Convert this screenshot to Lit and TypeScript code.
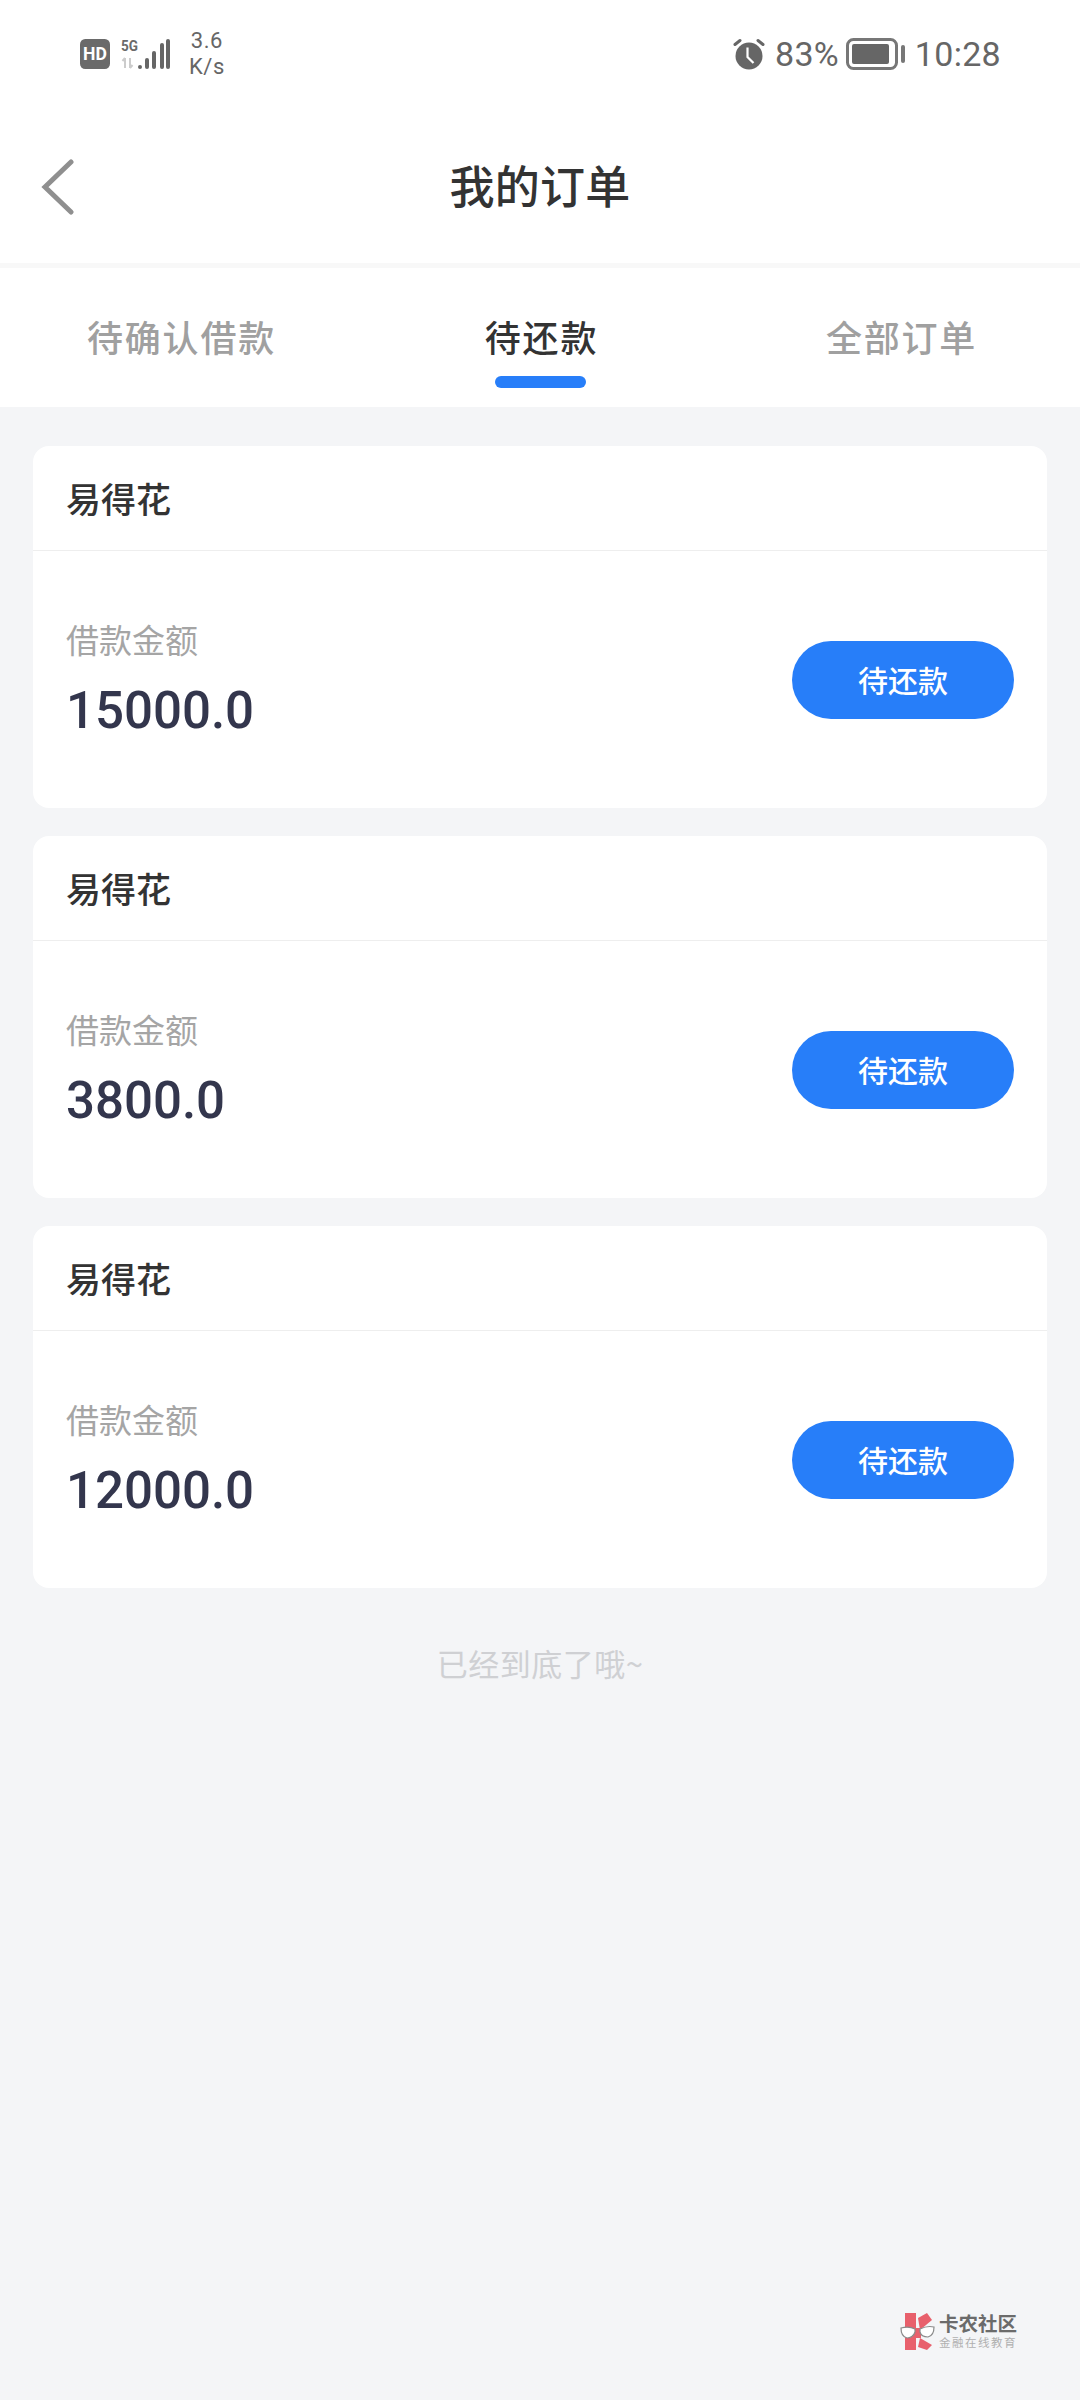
import { LitElement, html, css, svg } from "lit";
import { customElement } from "lit/decorators.js";

const CJK = `"Noto Sans CJK SC", "Noto Sans", sans-serif`;

@customElement("app-root")
export class AppRoot extends LitElement {
  static styles = css`
    :host { display: block; width: 1080px; height: 2400px; background: #f4f5f7; font-family: ${css([CJK] as any)}; position: relative; overflow: hidden; }
    .top { background: #fff; }
    .status { height: 108px; display: flex; align-items: center; justify-content: space-between; padding: 0 79px 0 80px; color: #666; font-family: Roboto, sans-serif; }
    .status-left, .status-right { display: flex; align-items: center; }
    .hd { width: 30px; height: 30px; display: block; margin-right: 11px; }
    .sig { width: 50px; height: 32px; display: block; margin-right: 18px; }
    .speed { font-size: 22px; line-height: 26px; letter-spacing: 0.5px; text-align: center; }
    .alarm { width: 34px; height: 34px; display: block; margin-right: 9px; }
    .pct { font-size: 34px; line-height: 40px; margin-right: 7px; letter-spacing: 0.2px; }
    .bat { width: 60px; height: 32px; display: block; margin-right: 9px; }
    .time { font-size: 34px; line-height: 40px; letter-spacing: 0.3px; }
    .nav { height: 155px; display: flex; align-items: center; justify-content: center; position: relative; padding-bottom: 2px; box-sizing: border-box; }
    .back { position: absolute; left: 40px; top: 51px; width: 36px; height: 56px; }
    .title { font-size: 45px; font-weight: 500; color: #333; line-height: 60px; letter-spacing: 0.3px; }
    .hair { height: 5px; background: #f8f8f8; }
    .tabs { height: 139px; display: grid; grid-template-columns: 360px 360px 360px; box-sizing: border-box; }
    .tab { display: flex; flex-direction: column; align-items: center; font-size: 36px; font-weight: 500; letter-spacing: 1.8px; color: #a0a0a0; padding-top: 43px; line-height: 50px; text-indent: 3px; }
    .tab.on { color: #333; }
    .ind { width: 91px; height: 12px; border-radius: 6px; background: #277ef9; margin-top: 15px; }
    .list { padding: 39px 33px 0; display: flex; flex-direction: column; gap: 28px; }
    .card { background: #fff; border-radius: 16px; height: 362px; display: flex; flex-direction: column; }
    .head { height: 105px; border-bottom: 1px solid #eeeeee; display: flex; align-items: center; padding: 0 0 2px 33px; font-size: 35px; font-weight: 500; color: #333; box-sizing: border-box; }
    .body { flex: 1; display: flex; align-items: center; justify-content: space-between; padding: 0 33px 0 33px; }
    .info { display: flex; flex-direction: column; }
    .label { font-size: 33px; line-height: 46px; color: #a5a5a5; }
    .amount { font-family: Roboto, sans-serif; font-size: 51px; font-weight: 500; line-height: 66px; color: #33364d; margin-top: 16px; }
    .btn { width: 222px; height: 78px; border-radius: 39px; background: #277ef9; color: #fff; font-size: 30px; font-weight: 500; display: flex; align-items: center; justify-content: center; padding-bottom: 2px; box-sizing: border-box; }
    .end { text-align: center; font-size: 31px; letter-spacing: 0.5px; color: #cfd0d3; margin-top: 53px; line-height: 44px; }
    .mark { position: absolute; left: 900px; top: 2310px; display: flex; gap: 3px; align-items: center; }
    .logo { width: 36px; height: 40px; display: block; }
    .mark-text { display: flex; flex-direction: column; gap: 3px; }
    .mark-a { font-size: 19.5px; font-weight: 700; line-height: 20px; color: #6b6b6b; }
    .mark-b { font-size: 11.5px; line-height: 12px; letter-spacing: 1.5px; color: #b0b0b0; }
  `;

  render() {
    const items = ["15000.0", "3800.0", "12000.0"];
    return html`
      <div class="top">
        <div class="status">
          <div class="status-left">
            <svg class="hd" viewBox="0 0 29 29">
              <rect width="29" height="29" rx="5" fill="#6a6a6a"/>
              <text x="14.5" y="20.5" text-anchor="middle" font-family="Roboto" font-weight="700" font-size="17" fill="#fff">HD</text>
            </svg>
            <svg class="sig" viewBox="0 0 50 32">
              <text x="0" y="13" font-family="Roboto" font-weight="700" font-size="15" fill="#6a6a6a" textLength="17" lengthAdjust="spacingAndGlyphs">5G</text>
              <path d="M4 30V20M1.5 23L4 20M9 20V30M9 30L11.5 27" stroke="#ccc" stroke-width="2" fill="none"/>
              ${[[19, 27], [26, 20], [33, 13], [41, 5], [47, 1]].map(
                ([x, y]) => svg`<rect x="${x - 2}" y="${y}" width="4" height="${31 - y}" rx="2" fill="#666"/>`
              )}
            </svg>
            <div class="speed">3.6<br />K/s</div>
          </div>
          <div class="status-right">
            <svg class="alarm" viewBox="0 0 34 34">
              <circle cx="17" cy="19" r="13.5" fill="#666"/>
              <path d="M3 7.5L8 3.5M31 7.5L26 3.5" stroke="#666" stroke-width="3" stroke-linecap="round"/>
              <path d="M15.5 10.5V20L21.5 26" stroke="#fff" stroke-width="2.2" fill="none"/>
            </svg>
            <span class="pct">83%</span>
            <svg class="bat" viewBox="0 0 60 32">
              <rect x="1.5" y="1.5" width="49" height="29" rx="6" fill="none" stroke="#777" stroke-width="3"/>
              <rect x="6" y="6" width="37" height="20" rx="2" fill="#666"/>
              <rect x="55" y="7" width="4" height="18" rx="2" fill="#777"/>
            </svg>
            <span class="time">10:28</span>
          </div>
        </div>
        <div class="nav">
          <svg class="back" viewBox="0 0 36 56">
            <path d="M31 3L5 28L31 53" fill="none" stroke="#8f8f8f" stroke-width="5" stroke-linecap="round" stroke-linejoin="miter"/>
          </svg>
          <div class="title">我的订单</div>
        </div>
        <div class="hair"></div>
        <div class="tabs">
          <div class="tab">待确认借款</div>
          <div class="tab on">待还款<div class="ind"></div></div>
          <div class="tab">全部订单</div>
        </div>
      </div>
      <div class="list">
        ${items.map(
          (a) => html`
            <div class="card">
              <div class="head">易得花</div>
              <div class="body">
                <div class="info">
                  <div class="label">借款金额</div>
                  <div class="amount">${a}</div>
                </div>
                <div class="btn">待还款</div>
              </div>
            </div>
          `
        )}
      </div>
      <div class="end">已经到底了哦~</div>
      <div class="mark">
        <svg class="logo" viewBox="0 0 36 40">
          <path d="M5 3H16V40H5Z" fill="#e8606c"/>
          <path d="M18 8L27 3L32 10L20 20Z" fill="#e8606c"/>
          <path d="M16 18H21V28H16Z" fill="#e8606c"/>
          <path d="M20 28L32 35L27 40L18 37Z" fill="#e8606c"/>
          <path d="M1 18C5 17 11 17 15 19V22C14 26 10 28 7 28C3 27 1 23 1 18Z" fill="#fff" stroke="#8a8a8a" stroke-width="1.2"/>
          <path d="M34 17C30 16 24 17 20 19V22C21 26 25 27 28 27C32 26 34 22 34 17Z" fill="#fff" stroke="#8a8a8a" stroke-width="1.2"/>
        </svg>
        <div class="mark-text">
          <span class="mark-a">卡农社区</span>
          <span class="mark-b">金融在线教育</span>
        </div>
      </div>
    `;
  }
}
